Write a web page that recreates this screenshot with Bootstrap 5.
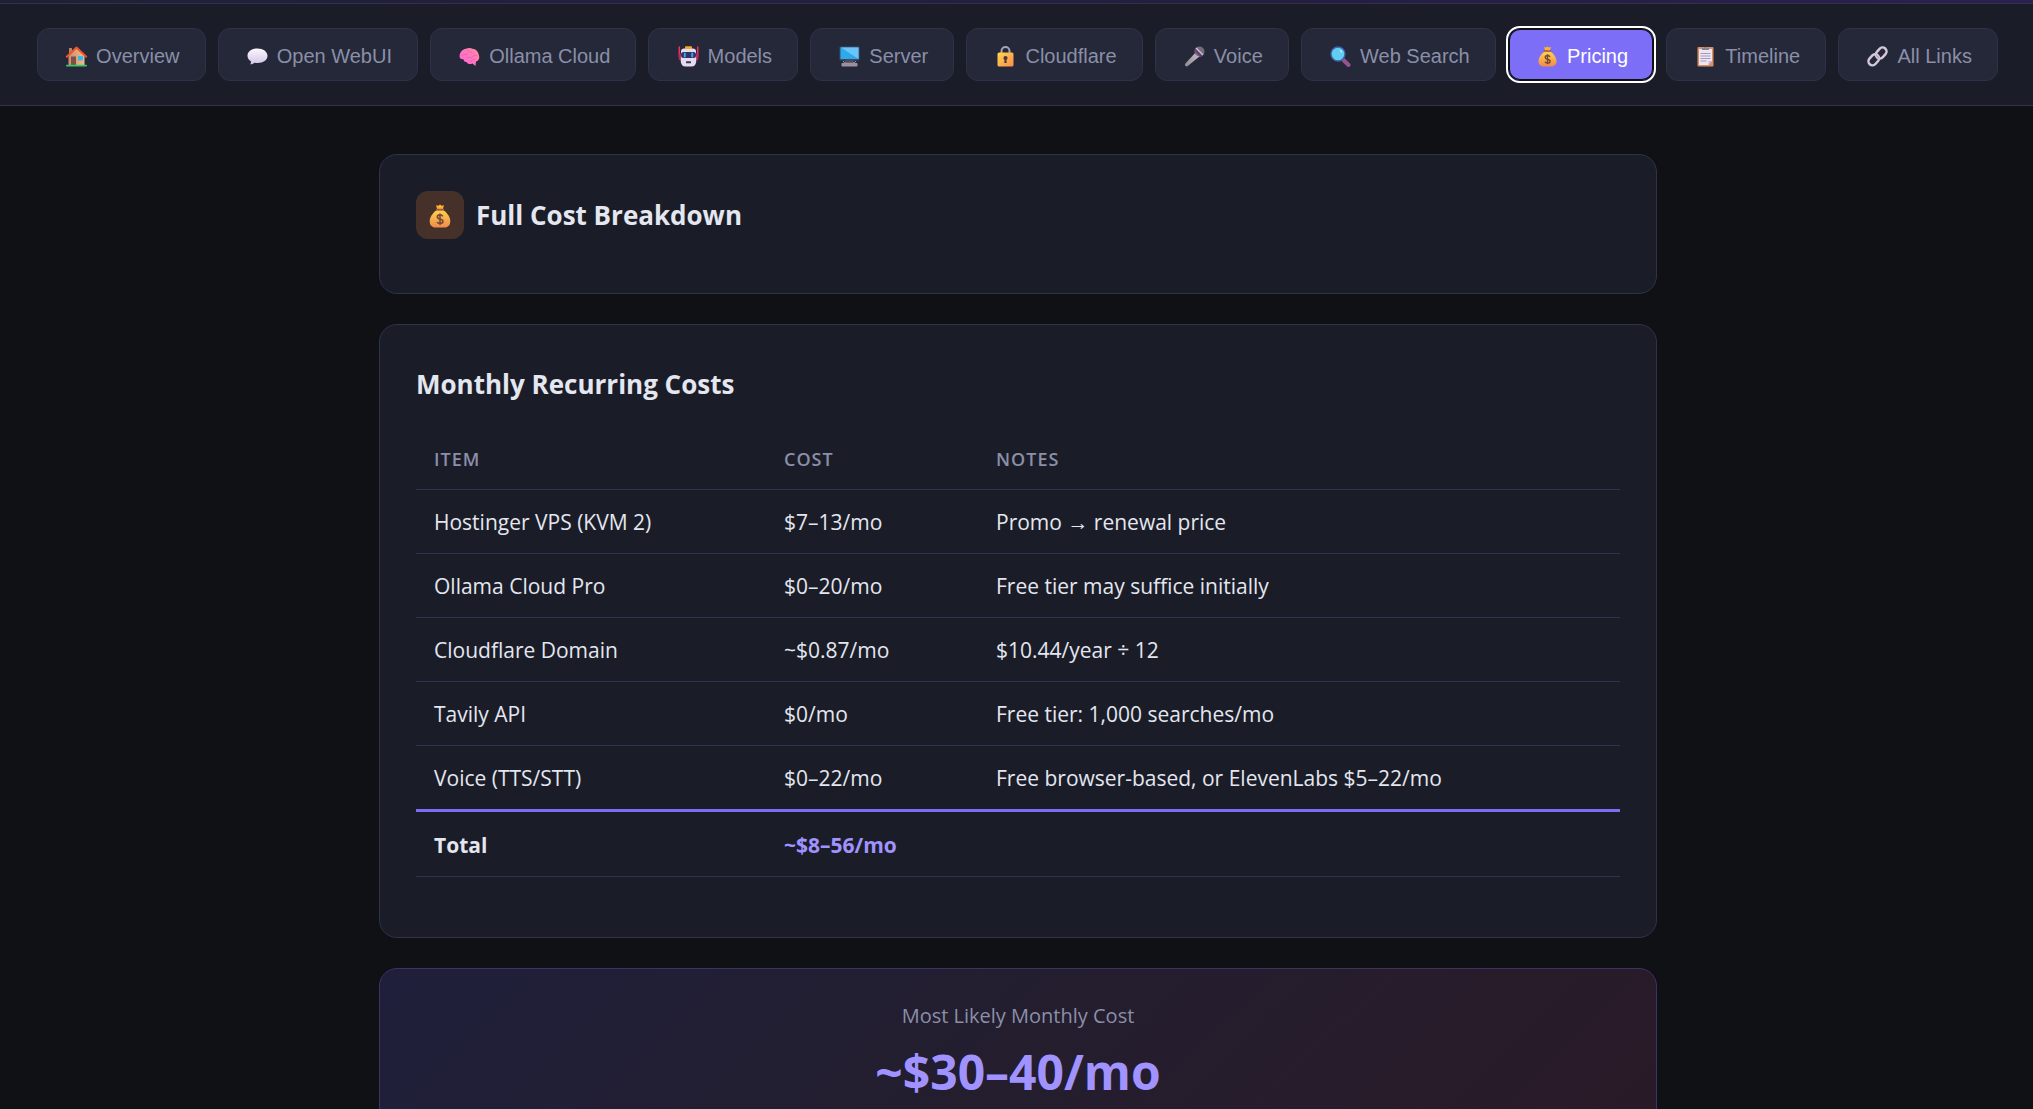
<!DOCTYPE html>
<html lang="en">
<head>
<meta charset="utf-8">
<meta name="viewport" content="width=device-width, initial-scale=1">
<title>Pricing</title>
<link href="https://cdn.jsdelivr.net/npm/bootstrap@5.3.0/dist/css/bootstrap.min.css" rel="stylesheet">
<style>
:root{--bg:#0f1115;--surface:#1a1d27;--surface2:#242838;--line:#2e324a;--ink:#e4e6f0;--muted:#8b8fa8;--accent:#7c6ef6;--accent-light:#a093ff}
body{background:var(--bg);color:var(--ink);font-family:"Open Sans","Noto Sans",sans-serif;font-size:21px}
.hero-end{height:4px;background:linear-gradient(90deg,#211f38,#241e40 60%,#2c2050);border-bottom:1px solid var(--line)}
.tabs-bar{background:var(--surface);border-bottom:1px solid var(--line);padding:24px 35px 24px 37px;gap:12px}
.tab-btn{display:flex;align-items:center;justify-content:center;gap:6px;height:53px;padding:2px 20px 0;white-space:nowrap;background:var(--surface2);border:1px solid var(--line);border-radius:12px;color:var(--muted);font-family:"Liberation Sans",Arial,sans-serif;font-size:20px;line-height:24px}
.tab-btn svg{width:27px;height:21px;margin-top:1px;flex:none}
.tab-btn.active{background:var(--accent);border-color:#101010;color:#fff;outline:2px solid #fff;outline-offset:0;box-shadow:inset 0 0 0 1px #101010}
.page{max-width:1351px;padding:48px 35px 0 38px}
.panel{background:var(--surface);border:1px solid var(--line);border-radius:18px;padding:36px;margin-bottom:30px}
.panel h2,.panel h3{font-weight:700;font-size:26px;line-height:48px;margin:0}
.panel h3{line-height:46px}
.head-row{gap:12px;margin-bottom:18px}
.tile{width:48px;height:48px;border-radius:12px;background:#45312a}
.tile svg{width:24px;height:24px;margin-top:2px}
.costs{width:100%;margin:16px 0 24px;border-collapse:collapse}
.costs th,.costs td{padding:2px 18px 0;height:64px;border-bottom:1px solid var(--line);vertical-align:middle;line-height:32px}
.costs thead th{height:66px;padding-top:6px;color:var(--muted);font-weight:600;font-size:18px;letter-spacing:1px;text-transform:uppercase}
.costs .c-item{width:350px}
.costs .c-cost{width:212px}
.costs tbody tr:last-child td{height:65px}
.costs tfoot td{border-top:3px solid var(--accent);height:66px;font-weight:700}
.hl{color:var(--accent-light)}
.estimate{background:linear-gradient(135deg,#1f1f3b,#231e2f 45%,#2a1a27);border-color:#3a3268;text-align:center;padding:30px 36px}
.estimate p{margin:0;color:var(--muted);font-size:20px;line-height:34px}
.estimate strong{display:block;color:var(--accent-light);font-size:48px;line-height:78px}
</style>
<script src="https://cdn.jsdelivr.net/npm/bootstrap@5.3.0/dist/js/bootstrap.bundle.min.js"></script>
</head>
<body>
<svg width="0" height="0" class="position-absolute" aria-hidden="true">
<defs>
<linearGradient id="gBag" x1="0" y1="0" x2="0" y2="1"><stop offset="0" stop-color="#ffd34d"/><stop offset="1" stop-color="#f08a4b"/></linearGradient>
<linearGradient id="gLock" x1="0" y1="0" x2="1" y2="1"><stop offset="0" stop-color="#ffd84a"/><stop offset="1" stop-color="#fb8a4c"/></linearGradient>
<linearGradient id="gBrain" x1="1" y1="0" x2="0" y2="1"><stop offset="0" stop-color="#ff8f9a"/><stop offset="1" stop-color="#ff5fe0"/></linearGradient>
<linearGradient id="gBub" x1="0" y1="0" x2="0" y2="1"><stop offset="0" stop-color="#fbf8fd"/><stop offset="1" stop-color="#d3c4e6"/></linearGradient>
<linearGradient id="gWall" x1="0" y1="0" x2="1" y2="0"><stop offset="0" stop-color="#c68f6b"/><stop offset="1" stop-color="#f2bd86"/></linearGradient>
<linearGradient id="gMic" x1="0" y1="1" x2="1" y2="0"><stop offset="0" stop-color="#8d8792"/><stop offset="1" stop-color="#c9c3cd"/></linearGradient>
</defs>
<symbol id="i-home" viewBox="0 0 21 21"><path d="M3 2h3v6H3z" fill="#b98263"/><path d="M2.500 9.500L10.500 2l8 7.500V19h-16z" fill="url(#gWall)"/><path d="M.8 10.800L10.500 1.500l9.700 9.300" fill="none" stroke="#f4512f" stroke-width="2" stroke-linecap="round" stroke-linejoin="round"/><rect x="5" y="10.500" width="5" height="8.500" fill="#7d5148"/><rect x="12" y="10" width="5" height="4.500" fill="#36b6f5"/><rect x="0" y="18.800" width="21" height="1.700" rx=".8" fill="#35c86d"/></symbol>
<symbol id="i-bubble" viewBox="0 0 21 21"><path d="M10.500 2.500C4.800 2.500.5 5.600.5 9.800c0 2.300 1.300 4.200 3.500 5.500 0 1-.1 2-.6 2.900 2 0 3.200-.7 4.200-1.500 7 1.300 12.900-1.800 12.900-6.900 0-4.200-4.300-7.300-10-7.300z" fill="url(#gBub)"/></symbol>
<symbol id="i-brain" viewBox="0 0 21 21"><path d="M.6 11C.3 7 3 3.200 7 2.800 9 1.500 12 1.800 13.500 2.800c3.500.2 6 3 6.300 6.200 1.300 3-.2 6-2.800 6.500L16.500 20l-3-2.500c-2.500 1.200-5 .5-6-1.500-2 .2-2.800-1-3-2.700C2.500 13.500.9 12.500.6 11z" fill="url(#gBrain)"/><path d="M3 10c2-3 4 0 6-3M8 4c1 2 4 1 5 3M8 12c2-2 4 1 6-2 1.500-1 3 .5 4-1M12 16c0-2 2-3 4-2.500" fill="none" stroke="#f052b4" stroke-width=".7"/></symbol>
<symbol id="i-robot" viewBox="0 0 21 21"><path d="M1.300 1v10M19.700 1v10" stroke="#f0315f" stroke-width="1.500" stroke-linecap="round"/><path d="M.8 8h2v6H.8zM18.200 8h2v6h-2z" fill="#c92057"/><rect x="7" y=".5" width="7" height="3" rx="1" fill="#f4a91f"/><path d="M3 5q.2-2.500 3-2.500h9q2.800 0 3 2.500l.3 10q-.3 5.500-5 5.500H7.700q-4.700 0-5-5.500z" fill="#e5daf0"/><rect x="3" y="6" width="15" height="6" rx="2.500" fill="#37325d"/><path d="M6.800 7.500v3M14.200 7.500v3" stroke="#27a9ff" stroke-width="2" stroke-linecap="round"/><rect x="8" y="15.300" width="5" height="2" rx=".5" fill="#3e3553"/><rect x="7" y=".5" width="7" height="2.500" rx="1" fill="#f4a91f"/></symbol>
<symbol id="i-pc" viewBox="0 0 21 21"><rect x=".5" y=".5" width="20" height="14" rx="1" fill="#3b4a67"/><rect x="1.500" y="1.500" width="18" height="11.500" fill="#2fa9ee"/><path d="M2 1.500h17.500V13z" fill="#6bc6f7"/><path d="M6 14h9v2H6z" fill="#514a57"/><path d="M4 15q1 2 3 2h7q2 0 3-2" fill="none" stroke="#a69cab" stroke-width="1"/><rect x="2.500" y="17" width="16" height="3.500" rx=".8" fill="#9a919e"/></symbol>
<symbol id="i-lock" viewBox="0 0 21 21"><path d="M6.500 8V5a4 4 0 0 1 8 0v3" fill="none" stroke="#a9a2b4" stroke-width="2"/><rect x="2.500" y="6.500" width="16" height="14" rx="1.500" fill="url(#gLock)"/><circle cx="10.500" cy="12" r="2.100" fill="#4c3545"/><path d="M9.700 12h1.600l.4 5H9.300z" fill="#4c3545"/></symbol>
<symbol id="i-mic" viewBox="0 0 21 21"><path d="M1 18L12 6l4 4L3.500 20.300Q.5 21 1 18z" fill="url(#gMic)"/><circle cx="15.500" cy="5.500" r="5" fill="#746c79"/><path d="M10 4l7 7.500 1.500-2L12 2z" fill="#6b3a78"/><path d="M12 2l7 7" stroke="#d5ccd9" stroke-width="1.200"/></symbol>
<symbol id="i-search" viewBox="0 0 21 21"><path d="M13.500 14l5 5" stroke="#96528f" stroke-width="4" stroke-linecap="round"/><circle cx="8" cy="8" r="7" fill="#62cdf2" stroke="#3d62a5" stroke-width="1.300"/><path d="M10 4.500q1.500.5 1.500 2" stroke="#d9f4ff" stroke-width="1.300" fill="none"/></symbol>
<symbol id="i-money" viewBox="0 0 21 21"><path d="M7 1l2 .6L10.500.4l1.500 1.200 2-.6-1.200 4H8.200z" fill="#ffb02e"/><path d="M7.600 5.500h5.800C17 8 19.500 11.500 19.500 15c0 4-2.500 5.500-5.500 5.500H7c-3 0-5.500-1.500-5.500-5.500C1.500 11.500 4 8 7.600 5.500z" fill="url(#gBag)"/><path d="M7.500 5h6" stroke="#a95345" stroke-width="1.500" stroke-linecap="round"/><path d="M13 10.800q-.7-1.300-2.500-1.300-2.300 0-2.300 1.800 0 1.400 2.300 1.900 2.600.5 2.600 2.200t-2.600 1.700Q8.600 17.100 8 15.700M10.500 8.300v10" fill="none" stroke="#754838" stroke-width="1.400"/></symbol>
<symbol id="i-clip" viewBox="0 0 21 21"><rect x="2.500" y="1" width="16" height="19.500" rx="1" fill="#dc8f5e"/><path d="M4 3h13v12l-3.500 4H4z" fill="#ece5f4"/><path d="M17 15l-3.500 4v-4z" fill="#c5b4d4"/><path d="M7 4V2h2q1.500-2.500 3 0h2v2z" fill="#8b8292"/><path d="M5.500 7.500h10M5.500 10h10M5.500 12.500h10M5.500 15h6" stroke="#a79bb3" stroke-width="1"/></symbol>
<symbol id="i-link" viewBox="0 0 21 21"><g fill="none" stroke="#d4c7dc" stroke-width="2.500"><rect x="-6" y="-4" width="12" height="8" rx="4" transform="translate(6.800 13.800) rotate(-48)"/><rect x="-6" y="-4" width="12" height="8" rx="4" transform="translate(14.200 7) rotate(-48)"/></g><path d="M9 9.500q2.500.5 2.800 3" fill="none" stroke="#a697b0" stroke-width="1"/></symbol>
</svg>
<div class="vh-100 overflow-hidden">
<div class="hero-end"></div>
<nav class="tabs-bar d-flex" aria-label="Sections">
<button type="button" class="tab-btn flex-fill"><svg aria-hidden="true"><use href="#i-home"/></svg>Overview</button>
<button type="button" class="tab-btn flex-fill"><svg aria-hidden="true"><use href="#i-bubble"/></svg>Open WebUI</button>
<button type="button" class="tab-btn flex-fill"><svg aria-hidden="true"><use href="#i-brain"/></svg>Ollama Cloud</button>
<button type="button" class="tab-btn flex-fill"><svg aria-hidden="true"><use href="#i-robot"/></svg>Models</button>
<button type="button" class="tab-btn flex-fill"><svg aria-hidden="true"><use href="#i-pc"/></svg>Server</button>
<button type="button" class="tab-btn flex-fill"><svg aria-hidden="true"><use href="#i-lock"/></svg>Cloudflare</button>
<button type="button" class="tab-btn flex-fill"><svg aria-hidden="true"><use href="#i-mic"/></svg>Voice</button>
<button type="button" class="tab-btn flex-fill"><svg aria-hidden="true"><use href="#i-search"/></svg>Web Search</button>
<button type="button" class="tab-btn flex-fill active" aria-current="page"><svg aria-hidden="true"><use href="#i-money"/></svg>Pricing</button>
<button type="button" class="tab-btn flex-fill"><svg aria-hidden="true"><use href="#i-clip"/></svg>Timeline</button>
<button type="button" class="tab-btn flex-fill"><svg aria-hidden="true"><use href="#i-link"/></svg>All Links</button>
</nav>
<main class="page mx-auto">
<section class="panel">
<div class="head-row d-flex align-items-center"><span class="tile d-flex align-items-center justify-content-center"><svg aria-hidden="true"><use href="#i-money"/></svg></span><h2>Full Cost Breakdown</h2></div>
</section>
<section class="panel">
<h3>Monthly Recurring Costs</h3>
<table class="costs">
<thead><tr><th class="c-item" scope="col">Item</th><th class="c-cost" scope="col">Cost</th><th scope="col">Notes</th></tr></thead>
<tbody>
<tr><td>Hostinger VPS (KVM 2)</td><td>$7–13/mo</td><td>Promo → renewal price</td></tr>
<tr><td>Ollama Cloud Pro</td><td>$0–20/mo</td><td>Free tier may suffice initially</td></tr>
<tr><td>Cloudflare Domain</td><td>~$0.87/mo</td><td>$10.44/year ÷ 12</td></tr>
<tr><td>Tavily API</td><td>$0/mo</td><td>Free tier: 1,000 searches/mo</td></tr>
<tr><td>Voice (TTS/STT)</td><td>$0–22/mo</td><td>Free browser-based, or ElevenLabs $5–22/mo</td></tr>
</tbody>
<tfoot><tr><td>Total</td><td class="hl">~$8–56/mo</td><td></td></tr></tfoot>
</table>
</section>
<section class="panel estimate">
<p>Most Likely Monthly Cost</p>
<strong>~$30–40/mo</strong>
</section>
</main>
</div>
</body>
</html>
